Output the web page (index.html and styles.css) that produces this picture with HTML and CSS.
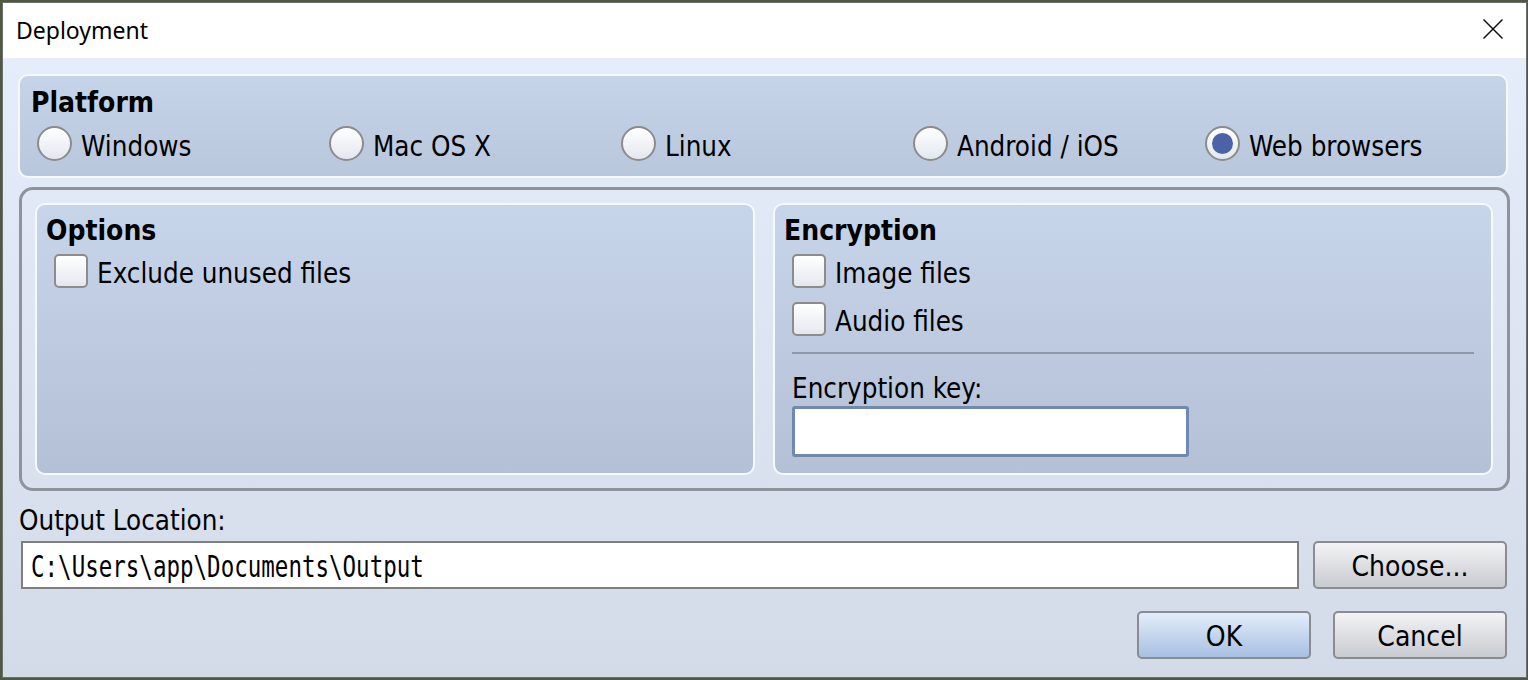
FILE: index.html
```html
<!DOCTYPE html>
<html>
<head>
<meta name="viewport" content="width=device-width, initial-scale=1">
<link rel="stylesheet" href="styles.css">
</head>
<body>

<div class="window">
  <div class="titlebar">
    <span class="title">Deployment</span>
    <svg class="close" width="22" height="22" viewBox="0 0 22 22">
      <path d="M1.5 1.5 L20.5 20.5 M20.5 1.5 L1.5 20.5" stroke="#111" stroke-width="1.5" fill="none"/>
    </svg>
  </div>

  <div class="content">
    <div class="group platform">
      <div class="heading">Platform</div>
      <div class="radios">
        <label class="radio"><input type="radio" name="platform"><span>Windows</span></label>
        <label class="radio"><input type="radio" name="platform"><span>Mac OS X</span></label>
        <label class="radio"><input type="radio" name="platform"><span>Linux</span></label>
        <label class="radio"><input type="radio" name="platform"><span>Android / iOS</span></label>
        <label class="radio"><input type="radio" name="platform" checked><span>Web browsers</span></label>
      </div>
    </div>

    <div class="frame">
      <div class="group panel">
        <div class="heading">Options</div>
        <label class="check"><input type="checkbox"><span>Exclude unused files</span></label>
      </div>
      <div class="group panel">
        <div class="heading">Encryption</div>
        <label class="check"><input type="checkbox"><span>Image files</span></label>
        <label class="check"><input type="checkbox"><span>Audio files</span></label>
        <div class="separator"></div>
        <div class="label key-label">Encryption key:</div>
        <input class="key" type="text">
      </div>
    </div>

    <div class="label out-label">Output Location:</div>
    <div class="out-row">
      <div class="path"><span class="mono">C:\Users\app\Documents\Output</span></div>
      <button class="btn choose">Choose...</button>
    </div>

    <div class="btn-row">
      <button class="btn ok">OK</button>
      <button class="btn">Cancel</button>
    </div>
  </div>
</div>

</body>
</html>
```

FILE: styles.css
```css
* {
  box-sizing: border-box;
}

body {
  margin: 0;
  background: #4f5842;
  font-family: "DejaVu Sans Condensed", "DejaVu Sans", sans-serif;
  font-stretch: condensed;
  font-size: 27.5px;
  color: #000;
}

.window {
  margin: 2px;
  width: 1525px;
  height: 676px;
  border: 1px solid #6e6e6e;
  display: flex;
  flex-direction: column;
  overflow: hidden;
}

.titlebar {
  height: 55px;
  background: #fff;
  display: flex;
  align-items: center;
  justify-content: space-between;
  padding: 0 22px 0 13px;
}

.title {
  font-family: "Noto Sans", sans-serif;
  font-stretch: normal;
  font-size: 23px;
  margin-top: -2px;
}

.close {
  margin-top: -4px;
}

.content {
  flex: 1;
  background: linear-gradient(#e5edfa, #d4dbe8);
  padding: 16px 0 0 15px;
  display: flex;
  flex-direction: column;
}

.group {
  border: 2px solid #f5f8fd;
  border-radius: 10px;
}

.heading {
  font-weight: bold;
  font-size: 28px;
  line-height: 34px;
}

.platform {
  width: 1490px;
  height: 104px;
  padding: 10px 11px 0;
  background: linear-gradient(#c6d4ea, #b9c7dd);
}

.radios {
  display: grid;
  grid-template-columns: repeat(5, 292px);
  margin: 3px 0 0 6px;
}

.radio, .check {
  display: flex;
  align-items: center;
  gap: 9px;
  height: 40px;
  line-height: 40px;
}

.radio span {
  padding-top: 5px;
}

.check span {
  padding-top: 3px;
}

.radio input, .check input {
  appearance: none;
  margin: 0;
  flex: none;
}

.radio input {
  width: 35px;
  height: 35px;
  border-radius: 50%;
  border: 2px solid #8c8c8c;
  background: linear-gradient(#ffffff, #e3e7ed);
  position: relative;
}

.radio input:checked::after {
  content: "";
  position: absolute;
  left: 5px;
  top: 5px;
  width: 21px;
  height: 21px;
  border-radius: 50%;
  background: #4c62a6;
}

.frame {
  width: 1491px;
  height: 304px;
  margin: 9px 0 0 1px;
  border: 3px solid #8f949c;
  border-radius: 14px;
  padding: 13px;
  display: flex;
  gap: 18px;
}

.panel {
  width: 720px;
  padding: 9px 17px 0 9px;
  background: linear-gradient(#c7d5eb, #b4c0d6);
}

.check {
  height: 44px;
  line-height: 44px;
  margin: 1px 0 0 8px;
}

.check + .check {
  margin-top: 4px;
}

.check input {
  width: 34px;
  height: 34px;
  border: 2px solid #8c8c8c;
  border-radius: 5px;
  background: linear-gradient(#ffffff, #e4e8ee);
}

.separator {
  margin: 11px 0 0 8px;
  border-top: 2px solid #8e98a8;
}

.label {
  font-size: 27.5px;
  line-height: 34px;
}

.key-label {
  margin: 17px 0 0 8px;
}

.key {
  width: 397px;
  height: 51px;
  margin: 1px 0 0 8px;
  border: 3px solid #7089ae;
  border-radius: 3px;
  background: #fff;
}

.out-label {
  margin: 12px 0 0 1px;
}

.out-row {
  display: flex;
  gap: 14px;
  margin: 4px 0 0 3px;
  height: 48px;
}

.path {
  width: 1278px;
  border: 2px solid #7f7f7f;
  background: #fff;
  display: flex;
  align-items: center;
  padding-left: 8px;
}

.mono {
  display: inline-block;
  font-family: "DejaVu Sans Mono", monospace;
  font-stretch: normal;
  font-size: 22.5px;
  transform: scaleY(1.3);
  margin-top: 3px;
}

.btn {
  width: 174px;
  height: 48px;
  border: 2px solid #8a8c91;
  border-radius: 5px;
  background: linear-gradient(#f3f3f4, #c8cbd1);
  font-family: inherit;
  font-stretch: condensed;
  font-size: 28px;
  color: #000;
  padding: 3px 0 0;
}

.choose {
  width: 194px;
}

.ok {
  background: linear-gradient(#e3edfa, #a7c0e2);
}

.btn-row {
  display: flex;
  justify-content: flex-end;
  gap: 22px;
  margin: 22px 19px 0 0;
}
```
